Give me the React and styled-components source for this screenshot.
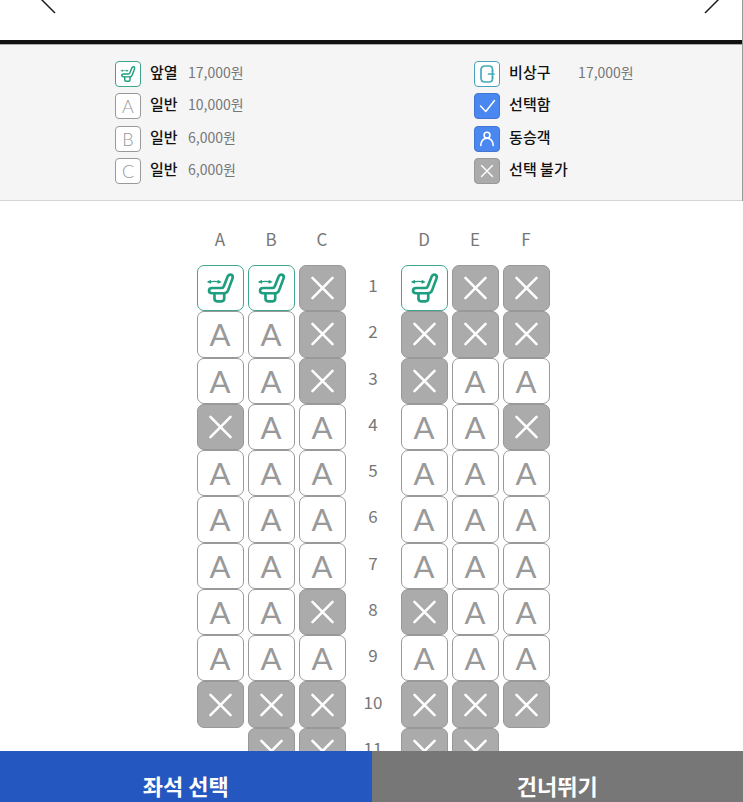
import * as React from 'react';
import styled, { createGlobalStyle } from 'styled-components';

const GlobalStyle = createGlobalStyle`
  * {
    box-sizing: border-box;
  }

  body {
    margin: 0;
    background: #fff;
    font-family: "Noto Sans CJK KR", "Noto Sans", sans-serif;
  }

  button {
    margin: 0;
    padding: 0;
    border: 0;
    background: none;
    font: inherit;
    cursor: pointer;
  }
`;

// one string per row, F = front, A = standard, X = taken, - = no seat
const rows = [
  'FFXFXX',
  'AAXXXX',
  'AAXXAA',
  'XAAAAX',
  'AAAAAA',
  'AAAAAA',
  'AAAAAA',
  'AAXXAA',
  'AAAAAA',
  'XXXXXX',
  '-XXXX-',
];

const letters = ['A', 'B', 'C', 'D', 'E', 'F'];

const seatNames = { F: '앞열', A: '일반', X: '선택 불가' };

const leftLegend = [
  { kind: 'F', name: '앞열', price: '17,000원' },
  { kind: 'A', name: '일반', price: '10,000원' },
  { kind: 'B', name: '일반', price: '6,000원' },
  { kind: 'C', name: '일반', price: '6,000원' },
];

const rightLegend = [
  { kind: 'exit', name: '비상구', price: '17,000원' },
  { kind: 'check', name: '선택함' },
  { kind: 'person', name: '동승객' },
  { kind: 'X', name: '선택 불가' },
];

const tones = {
  F: { line: '#3fa58c', fill: '#fff', ink: '#1f9e80' },
  X: { line: '#989898', fill: '#ababab', ink: '#fff' },
  exit: { line: '#45a5b8', fill: '#fff', ink: '#45a9bd' },
  check: { line: '#4377cf', fill: '#4b87f0', ink: '#fff' },
  person: { line: '#4377cf', fill: '#4b87f0', ink: '#fff' },
};

const plain = { line: '#999', fill: '#fff', ink: '#999' };

const toneOf = (kind) => tones[kind] || plain;

function Mark({ kind }) {
  if (kind === 'F') {
    return (
      <Glyph viewBox="0 0 46 46" strokeWidth="2.8">
        <path d="M11 26c0-2 1.300-3 3.200-3h9.600c1.400 0 2.200-.6 2.700-1.900l4-10c.8-1.900 2.100-2.500 3.700-1.900 1.700.7 2 2 1.300 4l-4.600 12.300c-.8 2.200-2 3-4.300 3H14.200c-2 0-3.200-.7-3.200-2.500z" />
        <path d="M16.700 28.500v5.600c0 1.900.9 2.800 2.700 2.800h4.800c1.800 0 2.700-.9 2.700-2.800v-5.600" />
        <path d="M11 16.700c3.600-.7 7.600-.7 11 0" strokeWidth="1.300" />
        <path d="M13 14.500l-4.300 2.200 4.300 1.900zM20 14.500l4.300 2.200-4.300 1.900z" fill="currentColor" strokeWidth="0" />
      </Glyph>
    );
  }
  if (kind === 'X') {
    return (
      <Glyph viewBox="0 0 46 46" strokeWidth="2.700">
        <path d="M12.500 12.500l21 21M33.500 12.500l-21 21" />
      </Glyph>
    );
  }
  if (kind === 'exit') {
    return (
      <Glyph viewBox="0 0 24 24" strokeWidth="1.700">
        <path d="M17.500 9V7.500c0-2.500-1-3.500-3.500-3.500h-4C7.500 4 6 5.500 6 8v8c0 2.500 1.500 4 4 4h4c2.500 0 3.500-1 3.500-3.500V15" />
        <path d="M19 12h-5.500M17.500 8.500v7" />
      </Glyph>
    );
  }
  if (kind === 'check') {
    return (
      <Glyph viewBox="0 0 24 24" strokeWidth="1.500">
        <path d="M5.500 12l5.300 5.500L19.500 6.500" />
      </Glyph>
    );
  }
  if (kind === 'person') {
    return (
      <Glyph viewBox="0 0 24 24" strokeWidth="1.600">
        <circle cx="12" cy="8.200" r="2.900" />
        <path d="M5.800 18.500c.3-4.500 2.500-7.300 6.200-7.300s5.900 2.800 6.200 7.300" />
      </Glyph>
    );
  }
  return kind;
}

function Legend({ items, nameWidth }) {
  return (
    <LegendList>
      {items.map((item, i) => (
        <LegendRow key={i}>
          <LegendIcon $tone={toneOf(item.kind)}>
            <Mark kind={item.kind} />
          </LegendIcon>
          <LegendName $width={nameWidth}>{item.name}</LegendName>
          {item.price && <LegendPrice>{item.price}</LegendPrice>}
        </LegendRow>
      ))}
    </LegendList>
  );
}

function SeatRow({ seats, number }) {
  const cells = seats.split('').map((kind, i) => {
    if (kind === '-') return <span key={i} />;
    return (
      <Seat
        key={i}
        type="button"
        $tone={toneOf(kind)}
        disabled={kind === 'X'}
        aria-label={`${number}${letters[i]} ${seatNames[kind]}`}
      >
        <Mark kind={kind} />
      </Seat>
    );
  });

  return (
    <>
      {cells.slice(0, 3)}
      <RowNumber>{number}</RowNumber>
      {cells.slice(3)}
    </>
  );
}

function App() {
  return (
    <Page>
      <GlobalStyle />

      <Top>
        <Header>
          <ArrowButton type="button" aria-label="이전">
            <Arrow viewBox="0 0 16 28"><path d="M15 1L2 14l13 13" /></Arrow>
          </ArrowButton>
          <ArrowButton type="button" aria-label="다음">
            <Arrow viewBox="0 0 16 28"><path d="M1 1l13 13L1 27" /></Arrow>
          </ArrowButton>
        </Header>
        <LegendPanel>
          <Legend items={leftLegend} nameWidth={29} />
          <Legend items={rightLegend} nameWidth={60} />
        </LegendPanel>
      </Top>

      <Cabin>
        <ColumnHeads>
          {letters.slice(0, 3).map((l) => <span key={l}>{l}</span>)}
          <span />
          {letters.slice(3).map((l) => <span key={l}>{l}</span>)}
        </ColumnHeads>
        <Seats>
          {rows.map((seats, i) => (
            <SeatRow key={i} seats={seats} number={i + 1} />
          ))}
        </Seats>
      </Cabin>

      <Footer>
        <FooterButton type="button" $color="#2457bf">좌석 선택</FooterButton>
        <FooterButton type="button" $color="#777">건너뛰기</FooterButton>
      </Footer>
    </Page>
  );
}

export default App

const Page = styled.div`
  display: flex;
  flex-direction: column;
  height: 100vh;
  overflow: hidden;
`;

const Top = styled.div`
  flex: none;
  border-right: 1px solid #999;
`;

const Header = styled.header`
  display: flex;
  justify-content: space-between;
  align-items: flex-end;
  height: 44px;
  padding: 0 22px 26px 40px;
  border-bottom: 4px solid #111;
  overflow: hidden;
`;

const ArrowButton = styled.button`
  display: flex;
`;

const Arrow = styled.svg`
  width: 16px;
  height: 28px;
  fill: none;
  stroke: #222;
  stroke-width: 1.500;
`;

const LegendPanel = styled.section`
  display: grid;
  grid-template-columns: 57fr 43fr;
  column-gap: 4px;
  padding: 16px 0 16px 115px;
  border-top: 1px solid #aaa;
  border-bottom: 1px solid #d5d5d5;
  background: #f5f5f5;
`;

const LegendList = styled.ul`
  display: flex;
  flex-direction: column;
  justify-content: space-between;
  min-height: 123px;
  margin: 0;
  padding: 0;
  list-style: none;
`;

const LegendRow = styled.li`
  display: flex;
  align-items: center;
  gap: 9px;
  height: 26px;
`;

const LegendIcon = styled.span`
  display: flex;
  align-items: center;
  justify-content: center;
  width: 26px;
  height: 26px;
  border: 1px solid ${(p) => p.$tone.line};
  border-radius: 4px;
  background: ${(p) => p.$tone.fill};
  color: ${(p) => p.$tone.ink};
  font-family: Lato, sans-serif;
  font-size: 18px;
  font-weight: 300;
  line-height: 24px;
`;

const LegendName = styled.span`
  min-width: ${(p) => p.$width}px;
  padding-bottom: 4px;
  color: #111;
  font-size: 15px;
  font-weight: 500;
  line-height: 20px;
  white-space: nowrap;
`;

const LegendPrice = styled.span`
  padding-bottom: 4px;
  color: #777;
  font-size: 14px;
  line-height: 20px;
`;

const Glyph = styled.svg`
  flex: 1;
  min-width: 0;
  height: 24px;
  fill: none;
  stroke: currentColor;
  stroke-linecap: round;
  stroke-linejoin: round;
`;

const Cabin = styled.main`
  flex: 1;
  min-height: 0;
  padding: 26px 0 0 3px;
  overflow: hidden;
`;

const SeatGrid = styled.div`
  display: grid;
  grid-template-columns: repeat(7, 47px);
  column-gap: 4px;
  justify-content: center;
`;

const ColumnHeads = styled(SeatGrid)`
  color: #777;
  font-size: 17px;
  line-height: 24px;
  text-align: center;
`;

const Seats = styled(SeatGrid)`
  grid-auto-rows: 1fr;
  min-height: 509px;
  margin-top: 14px;
`;

const Seat = styled.button`
  display: flex;
  align-items: center;
  justify-content: center;
  border: 1px solid ${(p) => p.$tone.line};
  border-radius: 7px;
  background: ${(p) => p.$tone.fill};
  color: ${(p) => p.$tone.ink};
  font-family: Lato, sans-serif;
  font-size: 31px;
  line-height: 40px;

  ${Glyph} {
    height: 44px;
  }
`;

const RowNumber = styled.span`
  align-self: center;
  padding-bottom: 6px;
  color: #777;
  font-size: 17px;
  line-height: 24px;
  text-align: center;
`;

const Footer = styled.footer`
  display: grid;
  flex: none;
  grid-template-columns: 1fr 1fr;
  height: 51px;
`;

const FooterButton = styled.button`
  padding-top: 17px;
  background: ${(p) => p.$color};
  color: #fff;
  font-size: 22px;
  font-weight: 700;
  line-height: 32px;
`;
